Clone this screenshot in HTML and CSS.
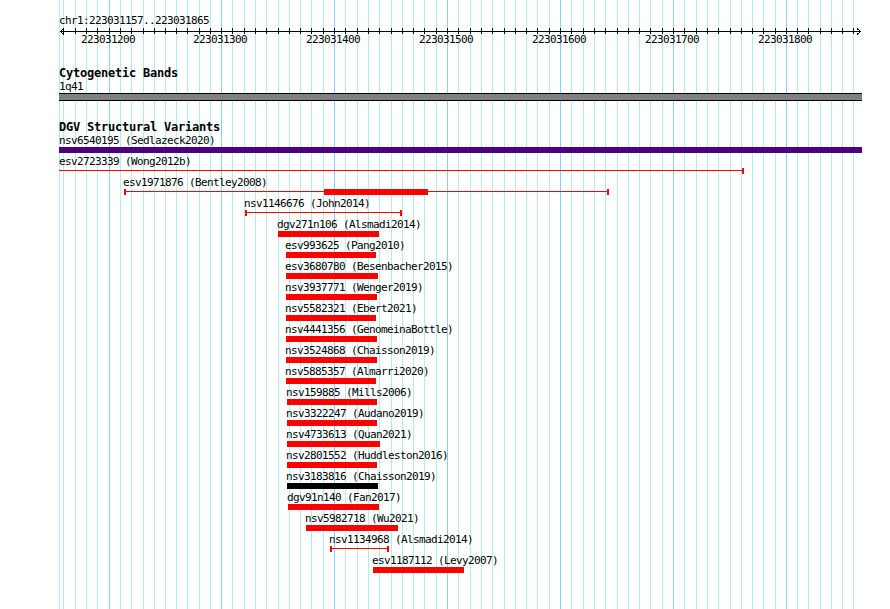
FILE: index.html
```html
<!doctype html>
<html lang="en">
<head>
    <meta charset="UTF-8">
    <title>chr1:223031157..223031865</title>
    <link rel="stylesheet" href="styles.css">
</head>
<body>
<div class="browser">
    <svg class="grid" id="grid" width="890" height="609"></svg>

    <header class="ruler">
        <div class="ref">chr1:223031157..223031865</div>
        <svg class="scale" id="scale" width="890" height="9">
            <rect class="tick" x="60" y="5" width="801" height="1"></rect>
            <polyline class="arrow" points="64,2.5 60.5,5.5 64,8.5"></polyline>
            <polyline class="arrow" points="857,2.5 860.5,5.5 857,8.5"></polyline>
        </svg>
        <div class="scale-labels">
            <span style="left:81px">223031200</span>
            <span style="left:193px">223031300</span>
            <span style="left:306px">223031400</span>
            <span style="left:419px">223031500</span>
            <span style="left:532px">223031600</span>
            <span style="left:645px">223031700</span>
            <span style="left:758px">223031800</span>
        </div>
    </header>

    <section class="track track-bands">
        <h2 class="track-title">Cytogenetic Bands</h2>
        <div class="band-label">1q41</div>
        <div class="band"></div>
    </section>

    <section class="track track-dgv">
        <h2 class="track-title">DGV Structural Variants</h2>
        <div class="features">
            <div class="feature clipped" style="margin-left:59px">
                <div class="label">nsv6540195 (Sedlazeck2020)</div>
                <div class="glyph box indigo" style="width:803px"></div>
            </div>
            <div class="feature clipped" style="margin-left:59px">
                <div class="label">esv2723339 (Wong2012b)</div>
                <div class="glyph span open-start" style="width:685px"></div>
            </div>
            <div class="feature" style="margin-left:124px">
                <div class="label">esv1971876 (Bentley2008)</div>
                <div class="glyph span" style="width:485px">
                    <div class="block" style="left:198px;width:104px"></div>
                </div>
            </div>
            <div class="feature" style="margin-left:245px">
                <div class="label">nsv1146676 (John2014)</div>
                <div class="glyph span" style="width:157px"></div>
            </div>
            <div class="feature" style="margin-left:278px">
                <div class="label">dgv271n106 (Alsmadi2014)</div>
                <div class="glyph box" style="width:101px"></div>
            </div>
            <div class="feature" style="margin-left:286px">
                <div class="label">esv993625 (Pang2010)</div>
                <div class="glyph box" style="width:90px"></div>
            </div>
            <div class="feature" style="margin-left:286px">
                <div class="label">esv3680780 (Besenbacher2015)</div>
                <div class="glyph box" style="width:92px"></div>
            </div>
            <div class="feature" style="margin-left:286px">
                <div class="label">nsv3937771 (Wenger2019)</div>
                <div class="glyph box" style="width:91px"></div>
            </div>
            <div class="feature" style="margin-left:286px">
                <div class="label">nsv5582321 (Ebert2021)</div>
                <div class="glyph box" style="width:90px"></div>
            </div>
            <div class="feature" style="margin-left:286px">
                <div class="label">nsv4441356 (GenomeinaBottle)</div>
                <div class="glyph box" style="width:91px"></div>
            </div>
            <div class="feature" style="margin-left:286px">
                <div class="label">nsv3524868 (Chaisson2019)</div>
                <div class="glyph box" style="width:91px"></div>
            </div>
            <div class="feature" style="margin-left:286px">
                <div class="label">nsv5885357 (Almarri2020)</div>
                <div class="glyph box" style="width:90px"></div>
            </div>
            <div class="feature" style="margin-left:287px">
                <div class="label">nsv159885 (Mills2006)</div>
                <div class="glyph box" style="width:90px"></div>
            </div>
            <div class="feature" style="margin-left:287px">
                <div class="label">nsv3322247 (Audano2019)</div>
                <div class="glyph box" style="width:90px"></div>
            </div>
            <div class="feature" style="margin-left:287px">
                <div class="label">nsv4733613 (Quan2021)</div>
                <div class="glyph box" style="width:93px"></div>
            </div>
            <div class="feature" style="margin-left:287px">
                <div class="label">nsv2801552 (Huddleston2016)</div>
                <div class="glyph box" style="width:90px"></div>
            </div>
            <div class="feature" style="margin-left:287px">
                <div class="label">nsv3183816 (Chaisson2019)</div>
                <div class="glyph box black" style="width:91px"></div>
            </div>
            <div class="feature" style="margin-left:288px">
                <div class="label">dgv91n140 (Fan2017)</div>
                <div class="glyph box" style="width:91px"></div>
            </div>
            <div class="feature" style="margin-left:306px">
                <div class="label">nsv5982718 (Wu2021)</div>
                <div class="glyph box" style="width:92px"></div>
            </div>
            <div class="feature" style="margin-left:330px">
                <div class="label">nsv1134968 (Alsmadi2014)</div>
                <div class="glyph span" style="width:59px"></div>
            </div>
            <div class="feature" style="margin-left:373px">
                <div class="label">esv1187112 (Levy2007)</div>
                <div class="glyph box" style="width:91px"></div>
            </div>
        </div>
    </section>
</div>
<script src="script.js"></script>
</body>
</html>
```

FILE: styles.css
```css
:root {
    --minor: #afeeee;
    --major: #87cefa;
    --feature: #f00;
}

body {
    margin: 0;
    background-color: #fff;
}

.browser {
    position: relative;
    width: 890px;
    height: 609px;
    overflow: hidden;
    box-sizing: border-box;
    padding-top: 16px;
    font-family: "DejaVu Sans Mono", "Liberation Mono", monospace;
    font-size: 11px;
    letter-spacing: -0.62px;
    line-height: 10px;
    color: #000;
}

.grid {
    position: absolute;
    top: 0;
    left: 0;
    z-index: 0;
}

.grid rect,
.scale rect,
.scale polyline {
    shape-rendering: crispEdges;
}

.grid .minor {
    fill: var(--minor);
}

.grid .major {
    fill: var(--major);
}

.scale .tick {
    fill: #000;
}

.scale .arrow {
    fill: none;
    stroke: #000;
    stroke-width: 1;
}

.ruler,
.track {
    position: relative;
    z-index: 1;
}

.ref {
    height: 10px;
    padding-left: 59px;
}

.scale {
    display: block;
}

.scale-labels {
    position: relative;
    height: 10px;
}

.scale-labels span {
    position: absolute;
    top: 0;
}

.track-title {
    margin: 0;
    padding-left: 59px;
    height: 12px;
    font-size: 12px;
    letter-spacing: -0.22px;
    line-height: 12px;
    font-weight: bold;
}

.track-bands .track-title {
    margin-top: 22px;
}

.track-dgv .track-title {
    margin-top: 20px;
}

.band-label {
    margin-top: 3px;
    padding-left: 59px;
    height: 10px;
}

.band {
    margin: 1px 0 0 59px;
    width: 803px;
    height: 6px;
    border-top: 1px solid #000;
    border-bottom: 1px solid #000;
    background-color: #808080;
}

.features {
    margin-top: 2px;
}

.feature {
    height: 21px;
}

.feature .label {
    height: 11px;
    line-height: 11px;
    margin-left: -1px;
    white-space: nowrap;
}

.feature.clipped .label {
    margin-left: 0;
}

.glyph {
    position: relative;
    box-sizing: border-box;
    margin-top: 1px;
    height: 6px;
}

.glyph.box {
    background-color: var(--feature);
}

.glyph.box.indigo {
    background-color: #4b0082;
}

.glyph.box.black {
    background-color: #000;
}

.glyph.span {
    border-left: 2px solid var(--feature);
    border-right: 2px solid var(--feature);
    background: linear-gradient(var(--feature), var(--feature)) 0 2px / 100% 1px no-repeat;
}

.glyph.span.open-start {
    border-left: none;
}

.glyph .block {
    position: absolute;
    top: 0;
    height: 6px;
    background-color: var(--feature);
}
```

FILE: script.js
```js
// pixel positions of the 100 bp marks, minor lines every 10 bp in between
const MAJORS = [109, 221, 334, 447, 560, 673, 786];
const SVG_NS = 'http://www.w3.org/2000/svg';

function gridPositions() {
    const list = [63, 75, 86, 97].map(x => ({x: x, major: false}));

    MAJORS.forEach((major, i) => {
        list.push({x: major, major: true});

        const next = MAJORS[i + 1];
        const step = next ? (next - major) / 10 : 11.2;
        const count = next ? 9 : 6;

        for (let k = 1; k <= count; k++) {
            list.push({x: Math.round(major + k * step), major: false});
        }
    });

    return list;
}

function rect(parent, x, y, width, height, className) {
    const el = document.createElementNS(SVG_NS, 'rect');
    el.setAttribute('x', x);
    el.setAttribute('y', y);
    el.setAttribute('width', width);
    el.setAttribute('height', height);
    el.setAttribute('class', className);
    parent.appendChild(el);
}

const $grid = document.getElementById('grid');
const $scale = document.getElementById('scale');

rect($grid, 59, 0, 1, 609, 'minor');

gridPositions().forEach(pos => {
    rect($grid, pos.x, 0, 1, 609, pos.major ? 'major' : 'minor');
    rect($scale, pos.x, 2, 1, 6, 'tick');
});
```
